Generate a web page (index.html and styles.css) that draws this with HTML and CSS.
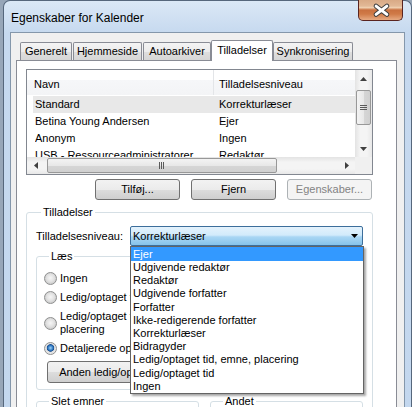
FILE: index.html
```html
<!DOCTYPE html>
<html lang="da">
<head>
<meta charset="utf-8">
<title>Egenskaber for Kalender</title>
<link rel="stylesheet" href="styles.css">
</head>
<body>
<div class="win">
  <div class="titlebar">
    <span class="title">Egenskaber for Kalender</span>
    <div class="close">
      <svg width="45" height="21" viewBox="0 0 45 21">
        <path d="M18.5 7 L29.5 15.5 M29.5 7 L18.5 15.5" stroke="#3c3c3c" stroke-width="5" stroke-linecap="round"/>
        <path d="M18.5 7 L29.5 15.5 M29.5 7 L18.5 15.5" stroke="#ffffff" stroke-width="3" stroke-linecap="round"/>
      </svg>
    </div>
  </div>
  <div class="client">
    <div class="tabs">
      <div class="tab tab-generelt">Generelt</div>
      <div class="tab tab-hjemmeside">Hjemmeside</div>
      <div class="tab tab-autoarkiver">Autoarkiver</div>
      <div class="tab tab-active">Tilladelser</div>
      <div class="tab tab-synk">Synkronisering</div>
    </div>
    <div class="panel">
      <div class="listview">
        <div class="lv-view">
          <div class="lv-header">
            <div class="lv-hcell lv-hcell-first">Navn</div>
            <div class="lv-hcell">Tilladelsesniveau</div>
          </div>
          <div class="lv-row lv-row-sel"><span>Standard</span><span>Korrekturlæser</span></div>
          <div class="lv-row"><span>Betina Young Andersen</span><span>Ejer</span></div>
          <div class="lv-row"><span>Anonym</span><span>Ingen</span></div>
          <div class="lv-row"><span>USB - Ressourceadministratorer</span><span>Redaktør</span></div>
        </div>
        <div class="vscroll">
          <div class="sb-btn">
            <svg width="7" height="4" viewBox="0 0 7 4"><polygon points="0,4 7,4 3.5,0" fill="#404040"/></svg>
          </div>
          <div class="sb-track-v">
            <div class="thumb-v">
              <svg width="7" height="6" viewBox="0 0 7 6"><path d="M0 0.5H7M0 2.5H7M0 4.5H7" stroke="#5a5a5a" stroke-width="1"/></svg>
            </div>
          </div>
          <div class="sb-btn">
            <svg width="7" height="4" viewBox="0 0 7 4"><polygon points="0,0 7,0 3.5,4" fill="#404040"/></svg>
          </div>
        </div>
        <div class="hscroll">
          <div class="sb-btn-h">
            <svg width="4" height="7" viewBox="0 0 4 7"><polygon points="4,0 4,7 0,3.5" fill="#404040"/></svg>
          </div>
          <div class="sb-track-h">
            <div class="thumb-h">
              <svg width="6" height="7" viewBox="0 0 6 7"><path d="M0.5 0V7M2.5 0V7M4.5 0V7" stroke="#5a5a5a" stroke-width="1"/></svg>
            </div>
          </div>
          <div class="sb-btn-h">
            <svg width="4" height="7" viewBox="0 0 4 7"><polygon points="0,0 0,7 4,3.5" fill="#404040"/></svg>
          </div>
        </div>
        <div class="sb-corner"></div>
      </div>

      <div class="btnrow">
        <div class="btn">Tilføj...</div>
        <div class="btn">Fjern</div>
        <div class="btn btn-disabled">Egenskaber...</div>
      </div>

      <fieldset class="group group-perm">
        <legend>Tilladelser</legend>
        <div class="levelrow">
          <span class="levellabel">Tilladelsesniveau:</span>
          <div class="combo">
            <span>Korrekturlæser</span>
            <svg class="combo-arrow" width="7" height="4" viewBox="0 0 7 4"><polygon points="0,0 7,0 3.5,4" fill="#000"/></svg>
            <ul class="droplist">
              <li class="drop-sel">Ejer</li>
              <li>Udgivende redaktør</li>
              <li>Redaktør</li>
              <li>Udgivende forfatter</li>
              <li>Forfatter</li>
              <li>Ikke-redigerende forfatter</li>
              <li>Korrekturlæser</li>
              <li>Bidragyder</li>
              <li>Ledig/optaget tid, emne, placering</li>
              <li>Ledig/optaget tid</li>
              <li>Ingen</li>
            </ul>
          </div>
        </div>
        <div class="cols">
          <fieldset class="group group-inner">
            <legend>Læs</legend>
            <div class="opts">
              <div class="opt"><span class="radio"></span><span>Ingen</span></div>
              <div class="opt"><span class="radio"></span><span>Ledig/optaget tid</span></div>
              <div class="opt"><span class="radio"></span><span>Ledig/optaget tid, emne, placering</span></div>
              <div class="opt"><span class="radio radio-on"></span><span>Detaljerede oplysninger</span></div>
              <div class="btn btn-wide">Anden ledig/optaget tid...</div>
            </div>
          </fieldset>
          <fieldset class="group group-inner">
            <legend>Skriv</legend>
            <div class="opts">
              <div class="opt"><span class="check"></span><span>Opret emner</span></div>
              <div class="opt"><span class="check"></span><span>Opret undermapper</span></div>
              <div class="opt"><span class="check"></span><span>Rediger egne</span></div>
              <div class="opt"><span class="check"></span><span>Rediger alle</span></div>
            </div>
          </fieldset>
          <fieldset class="group group-inner">
            <legend>Slet emner</legend>
            <div class="opts">
              <div class="opt"><span class="radio"></span><span>Ingen</span></div>
            </div>
          </fieldset>
          <fieldset class="group group-inner">
            <legend>Andet</legend>
            <div class="opts">
              <div class="opt"><span class="check"></span><span>Mappeejer</span></div>
            </div>
          </fieldset>
        </div>
      </fieldset>
    </div>
  </div>
</div>
</body>
</html>
```
FILE: styles.css
```css
* { box-sizing: border-box; }
html, body { margin: 0; padding: 0; }
body {
  width: 412px;
  height: 407px;
  overflow: hidden;
  background: #97a6b8;
  font-family: "Liberation Sans", Arial, sans-serif;
  font-size: 11px;
  color: #000;
}
.win {
  margin-left: 3px;
  width: 409px;
  height: 420px;
  border: 1px solid #56677c;
  border-bottom: none;
  border-radius: 7px 7px 0 0;
  background: linear-gradient(#dbe8f6, #c6d9ef 32px, #c3d7ee);
  padding: 0 6px;
  display: flex;
  flex-direction: column;
}
.titlebar {
  height: 32px;
  display: flex;
  justify-content: space-between;
  align-items: flex-start;
}
.title {
  font-size: 12px;
  line-height: 14px;
  margin-top: 10px;
  padding-left: 1px;
}
.close {
  width: 45px;
  height: 21px;
  margin-top: -1px;
  margin-right: 2px;
  border: 1px solid #5a2420;
  border-top: none;
  border-radius: 0 0 5px 5px;
  background: linear-gradient(#d9aa86 0%, #e2b896 30%, #efcfb0 38%, #c9703f 50%, #d07a47 70%, #e6aa82 100%);
  display: flex;
}
.close svg { margin: -1px 0 0 -1px; }
.client {
  flex: 1;
  background: #f0f0f0;
  border: 1px solid #8497ab;
  border-bottom: none;
  padding: 7px 7px 0 5px;
}
.tabs {
  height: 20px;
  display: flex;
  align-items: flex-end;
  padding-left: 4px;
}
.tab {
  height: 18px;
  line-height: 17px;
  text-align: center;
  border: 1px solid #898c95;
  border-bottom: none;
  border-radius: 2px 2px 0 0;
  background: linear-gradient(#f4f4f4, #ececec 50%, #dfdfdf 50%, #d6d6d6);
  white-space: nowrap;
}
.tab-generelt { width: 52px; }
.tab-hjemmeside { width: 69px; margin-left: 1px; }
.tab-autoarkiver { width: 68px; margin-left: 1px; }
.tab-synk { width: 80px; }
.tab-active {
  width: 62px;
  height: 21px;
  margin-bottom: -1px;
  line-height: 18px;
  background: #fff;
  position: relative;
  z-index: 1;
}
.panel {
  background: #fff;
  border: 1px solid #898c95;
  height: 360px;
  padding: 8px 23px 0 9px;
}
.listview {
  height: 106px;
  border: 1px solid #828790;
  display: grid;
  grid-template-columns: 328px 17px;
  grid-template-rows: 87px 17px;
}
.lv-view { overflow: hidden; }
.lv-header {
  height: 25px;
  display: flex;
  background: linear-gradient(#fff 0, #fff 38%, #f6f7f9 38%, #f3f4f6);
  margin-bottom: 1px;
}
.lv-hcell {
  line-height: 25px;
  padding-top: 2px;
  padding-left: 5px;
  flex: 1;
}
.lv-hcell-first {
  flex: 0 0 187px;
  padding-left: 7px;
  border-right: 1px solid #e3e5e8;
}
.lv-row {
  margin-left: 6px;
  height: 17px;
  line-height: 17px;
  padding-left: 2px;
  display: grid;
  grid-template-columns: 184px 1fr;
  white-space: nowrap;
}
.lv-row span { overflow: hidden; }
.lv-row-sel { background: #e8e8e8; }
.vscroll {
  display: flex;
  flex-direction: column;
  background: linear-gradient(90deg, #e3e3e3, #f4f4f4 30%, #f4f4f4 70%, #e8e8e8);
}
.sb-btn {
  height: 17px;
  display: flex;
  align-items: center;
  justify-content: center;
}
.sb-track-v { flex: 1; padding: 3px 1px 0 1px; }
.thumb-v {
  height: 35px;
  border: 1px solid #989898;
  border-radius: 2px;
  background: linear-gradient(90deg, #f3f3f3, #e8e8e8 50%, #d6d6d6 50%, #d0d0d0);
  display: flex;
  align-items: center;
  justify-content: center;
}
.hscroll {
  display: flex;
  background: linear-gradient(#e3e3e3, #f4f4f4 30%, #f4f4f4 70%, #e8e8e8);
}
.sb-btn-h {
  width: 17px;
  display: flex;
  align-items: center;
  justify-content: center;
}
.sb-track-h { flex: 1; padding: 1px 0 1px 3px; }
.thumb-h {
  width: 230px;
  height: 100%;
  border: 1px solid #989898;
  border-radius: 2px;
  background: linear-gradient(#f3f3f3, #e8e8e8 50%, #d6d6d6 50%, #d0d0d0);
  display: flex;
  align-items: center;
  justify-content: center;
}
.sb-corner { background: #f0f0f0; }
.btnrow {
  margin-top: 4px;
  display: flex;
  justify-content: flex-end;
  gap: 11px;
  padding-right: 1px;
}
.btn {
  width: 85px;
  height: 21px;
  line-height: 19px;
  text-align: center;
  border: 1px solid #707070;
  border-radius: 3px;
  background: linear-gradient(#f2f2f2, #ebebeb 50%, #dddddd 50%, #cfcfcf);
  white-space: nowrap;
  overflow: hidden;
}
.btn-disabled {
  border-color: #adb2b5;
  background: #f4f4f4;
  color: #838383;
}
.group {
  margin: 0;
  min-width: 0;
  border: 1px solid #d5dfe5;
  border-radius: 3px;
}
.group legend {
  line-height: 14px;
  padding: 0 2px;
  margin-left: 5px;
}
.group-perm {
  margin-top: 5px;
  padding: 7px 9px 0 9px;
}
.levelrow {
  display: flex;
  align-items: center;
}
.levellabel { width: 94px; }
.combo {
  position: relative;
  width: 233px;
  height: 20px;
  border: 1px solid #3c6e9b;
  border-radius: 2px;
  background: linear-gradient(#e4f2fc, #d2ebfb 45%, #a9d6f4 55%, #86c3ea);
  padding-left: 2px;
  line-height: 18px;
  display: flex;
  justify-content: space-between;
  align-items: center;
}
.combo-arrow { margin-right: 4px; }
.droplist {
  position: absolute;
  left: -1px;
  top: 19px;
  width: 234px;
  margin: 0;
  padding: 0;
  list-style: none;
  background: #fff;
  border: 1px solid #646464;
  box-shadow: 2px 2px 2px rgba(0, 0, 0, 0.35);
  z-index: 5;
}
.droplist li {
  height: 13.2px;
  line-height: 13px;
  padding-left: 2px;
  white-space: nowrap;
}
.droplist .drop-sel {
  background: #3399ff;
  color: #fff;
  height: 14px;
  line-height: 14px;
}
.cols {
  margin-top: 3px;
  display: grid;
  grid-template-columns: 163px 153px;
  column-gap: 11px;
  row-gap: 4px;
}
.group-inner { padding: 9px 6px 6px 7px; }
.opts {
  display: flex;
  flex-direction: column;
  gap: 6px;
}
.opt {
  display: flex;
  align-items: center;
  gap: 3px;
  line-height: 13px;
}
.radio {
  flex: 0 0 13px;
  width: 13px;
  height: 13px;
  border-radius: 50%;
  border: 1px solid #8e8f8f;
  background: radial-gradient(circle at 50% 45%, #f6f6f6 0, #e2e2e2 45%, #cfcfcf 70%, #ededed 100%);
}
.radio-on {
  background: radial-gradient(circle at 50% 45%, #9fd3f5 0, #2f78c2 30%, #1b4f8f 42%, #e0e0e0 50%, #f2f2f2 100%);
}
.check {
  flex: 0 0 13px;
  width: 13px;
  height: 13px;
  border: 1px solid #8e8f8f;
  background: linear-gradient(135deg, #dcdcdc, #fbfbfb);
}
.btn-wide {
  width: 146px;
  height: 22px;
  line-height: 20px;
  margin-left: 3px;
}
```
